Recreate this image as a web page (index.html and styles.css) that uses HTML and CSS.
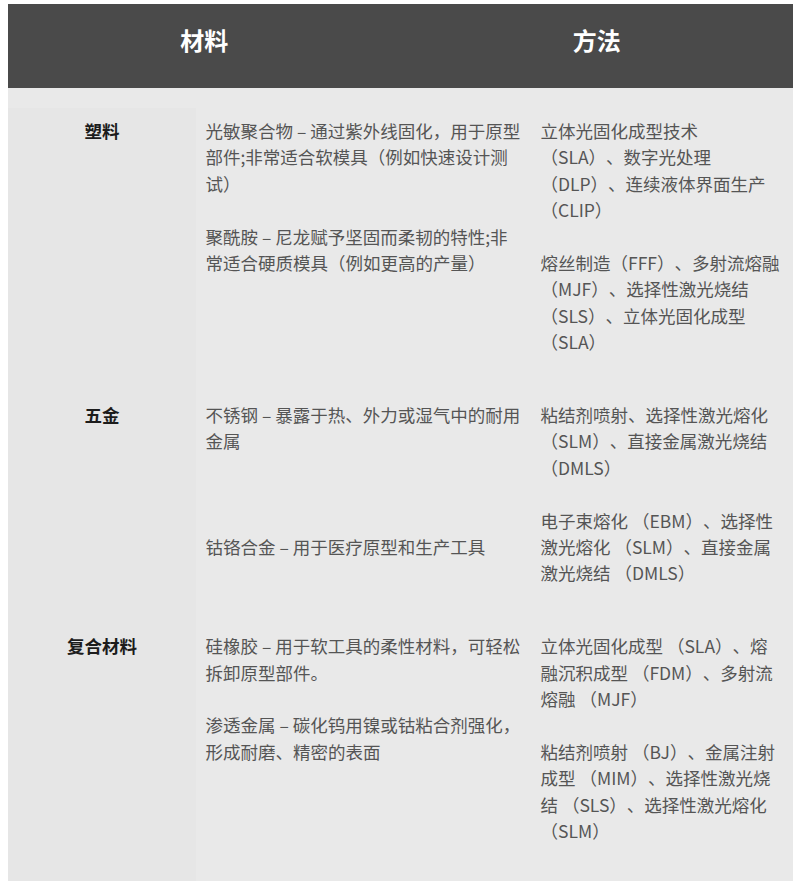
FILE: index.html
```html
<!DOCTYPE html>
<html lang="zh-CN">
<head>
<meta charset="utf-8">
<title>材料与方法</title>
<link rel="stylesheet" href="styles.css">
</head>
<body>
<div class="table">
  <div class="head">
    <div class="head-cell">材料</div>
    <div class="head-cell">方法</div>
  </div>
  <div class="spacer"></div>
  <div class="grid">
    <div class="label">塑料</div>
    <div class="desc">
      <p>光敏聚合物 – 通过紫外线固化，用于原型部件;非常适合软模具（例如快速设计测试）</p>
      <p>聚酰胺 – 尼龙赋予坚固而柔韧的特性;非常适合硬质模具（例如更高的产量）</p>
    </div>
    <div class="method">
      <p>立体光固化成型技术 （SLA）、数字光处理 （DLP）、连续液体界面生产 （CLIP）</p>
      <p>熔丝制造（FFF）、多射流熔融 （MJF）、选择性激光烧结 （SLS）、立体光固化成型 （SLA）</p>
    </div>

    <div class="label">五金</div>
    <div class="desc">
      <p>不锈钢 – 暴露于热、外力或湿气中的耐用金属</p>
      <p>&nbsp;</p>
      <p>钴铬合金 – 用于医疗原型和生产工具</p>
    </div>
    <div class="method">
      <p>粘结剂喷射、选择性激光熔化 （SLM）、直接金属激光烧结 （DMLS）</p>
      <p>电子束熔化 （EBM）、选择性激光熔化 （SLM）、直接金属激光烧结 （DMLS）</p>
    </div>

    <div class="label">复合材料</div>
    <div class="desc">
      <p>硅橡胶 – 用于软工具的柔性材料，可轻松拆卸原型部件。</p>
      <p>渗透金属 – 碳化钨用镍或钴粘合剂强化，形成耐磨、精密的表面</p>
    </div>
    <div class="method">
      <p>立体光固化成型 （SLA）、熔融沉积成型 （FDM）、多射流熔融 （MJF）</p>
      <p>粘结剂喷射 （BJ）、金属注射成型 （MIM）、选择性激光烧结 （SLS）、选择性激光熔化 （SLM）</p>
    </div>
  </div>
</div>
</body>
</html>
```

FILE: styles.css
```css
html, body {
  background: #ffffff;
}
body {
  margin: 4px 8px 8px 8px;
  font-family: "Noto Sans CJK SC", "Noto Sans", sans-serif;
  text-spacing-trim: space-all;
}
.table {
  width: 785px;
}
.head {
  display: flex;
  height: 84px;
  background: #4a4a4a;
}
.head-cell {
  flex: 1 1 0;
  display: flex;
  align-items: center;
  justify-content: center;
  padding-bottom: 12px;
  color: #ffffff;
  font-size: 24px;
  font-weight: 700;
  line-height: 36px;
}
.spacer {
  height: 20px;
  background: #e9e9e9;
}
.grid {
  display: grid;
  grid-template-columns: 188px 334px 263px;
  background: #e9e9e9;
  font-size: 17.5px;
  line-height: 26.4px;
}
.label {
  background: #e6e6e6;
  padding: 10px 0;
  text-align: center;
  font-weight: 700;
  color: #1c1c1c;
}
.desc {
  padding: 10px 8px 10px 9.5px;
  color: #555555;
}
.method {
  padding: 10px 10px 10px 10.5px;
  color: #555555;
}
.desc p,
.method p {
  margin: 0 0 26.4px 0;
}
```
